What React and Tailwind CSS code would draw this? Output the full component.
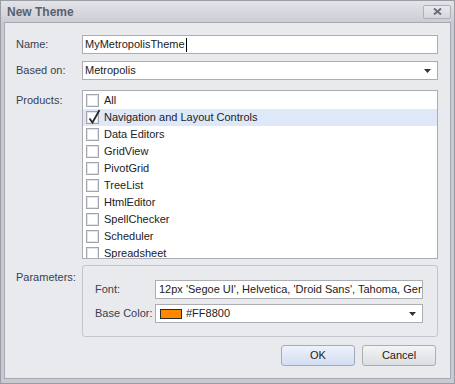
import { useState } from "react";

const products = [
  "All",
  "Navigation and Layout Controls",
  "Data Editors",
  "GridView",
  "PivotGrid",
  "TreeList",
  "HtmlEditor",
  "SpellChecker",
  "Scheduler",
  "Spreadsheet",
];

const DropArrow = () => (
  <svg width="7" height="4" viewBox="0 0 7 4" className="shrink-0">
    <path d="M0 0 H7 L3.5 4 Z" fill="#333" />
  </svg>
);

const CheckBox = ({ checked }) => (
  <div className="relative w-[13px] h-[13px] border border-[#a3a5ad] bg-white shadow-[inset_0_0_0_1px_#e4e5ea] shrink-0">
    {checked && (
      <svg width="14" height="16" viewBox="0 0 14 16" className="absolute left-[1px] top-[-3px]">
        <path d="M1.5 9.5 L4.5 13.5 L11.5 1" fill="none" stroke="#2b2b2b" strokeWidth="1.8" />
      </svg>
    )}
  </div>
);

const App = () => {
  const [selected] = useState(1);

  return (
    <div className="w-[455px] h-[384px] border border-[#9a9ca6] bg-[#c8cad1] px-[3px] pb-[4px] flex flex-col font-['Liberation_Sans',Arial,sans-serif] text-[11px] text-[#3a4050]">
      {/* title bar */}
      <div className="h-[21px] flex items-center justify-between bg-gradient-to-b from-[#e3e4e9] to-[#cccdd4] -mx-[3px] pl-[6px] pr-[3px]">
        <span className="font-bold text-[12px] text-[#5a6070]">New Theme</span>
        <button className="w-[28px] h-[14px] rounded-[2px] border border-[#aeb0b8] bg-gradient-to-b from-[#e8e9ed] to-[#d6d7dc] flex items-center justify-center">
          <svg width="9" height="7" viewBox="0 0 9 7">
            <path d="M1 0.5 L8 6.5 M8 0.5 L1 6.5" stroke="#6a6e78" strokeWidth="2" />
          </svg>
        </button>
      </div>

      {/* client area */}
      <div className="flex-1 min-h-0 border border-[#a7a9b2] bg-[#e9eaee] pl-[11px] pr-[12px] pt-[12px] flex flex-col">
        <div className="flex items-center">
          <span className="w-[66px] shrink-0">Name:</span>
          <div className="flex-1 min-w-0 h-[19px] border border-[#abadb3] bg-white flex items-center pl-[2px] text-[#222]">
            <span>MyMetropolisTheme</span>
            <span className="w-px h-[14px] bg-black ml-px" />
          </div>
        </div>

        <div className="flex items-center mt-[7px]">
          <span className="w-[66px] shrink-0">Based on:</span>
          <div className="flex-1 min-w-0 h-[19px] border border-[#abadb3] bg-white flex items-center justify-between pl-[2px] pr-[6px] text-[#222]">
            <span>Metropolis</span>
            <DropArrow />
          </div>
        </div>

        <div className="flex items-start mt-[10px]">
          <span className="w-[66px] shrink-0 pt-[2px]">Products:</span>
          <div className="flex-1 min-w-0 h-[169px] border border-[#abadb3] bg-white pt-px overflow-hidden text-[#222]">
            {products.map((p, i) => (
              <div
                key={p}
                className={`h-[17px] flex items-center pl-[3px] ${i === selected ? "bg-[#dfe8f8]" : ""}`}
              >
                <CheckBox checked={i === selected} />
                <span className="ml-[5px]">{p}</span>
              </div>
            ))}
          </div>
        </div>

        <div className="flex items-start mt-[6px]">
          <span className="w-[66px] shrink-0 pt-[4px]">Parameters:</span>
          <div className="flex-1 min-w-0 border border-[#c3c5cc] rounded-[3px] pl-[12px] pr-[14px] pt-[14px] pb-[13px] flex flex-col gap-[5px]">
            <div className="flex items-center">
              <span className="w-[60px] shrink-0">Font:</span>
              <div className="flex-1 min-w-0 h-[19px] border border-[#abadb3] bg-white flex items-center pl-[3px] overflow-hidden whitespace-nowrap text-[#222]">
                12px 'Segoe UI', Helvetica, 'Droid Sans', Tahoma, Geneva, sans-serif
              </div>
            </div>
            <div className="flex items-center">
              <span className="w-[60px] shrink-0">Base Color:</span>
              <div className="flex-1 min-w-0 h-[19px] border border-[#abadb3] bg-white flex items-center pl-[4px] pr-[6px] text-[#222]">
                <span className="w-[22px] h-[10px] shrink-0 border border-[#2a2a2a] bg-[#ff8800]" />
                <span className="ml-[4px] flex-1">#FF8800</span>
                <DropArrow />
              </div>
            </div>
          </div>
        </div>

        <div className="flex justify-end gap-[7px] mt-[8px] pr-[2px]">
          <button className="w-[74px] h-[21px] rounded-[3px] border border-[#a2aabd] bg-gradient-to-b from-[#eef2fb] to-[#d3def3] text-[#222]">
            OK
          </button>
          <button className="w-[74px] h-[21px] rounded-[3px] border border-[#abadb3] bg-gradient-to-b from-[#f4f4f6] to-[#dcdde2] text-[#222]">
            Cancel
          </button>
        </div>
      </div>
    </div>
  );
};

export default App;
